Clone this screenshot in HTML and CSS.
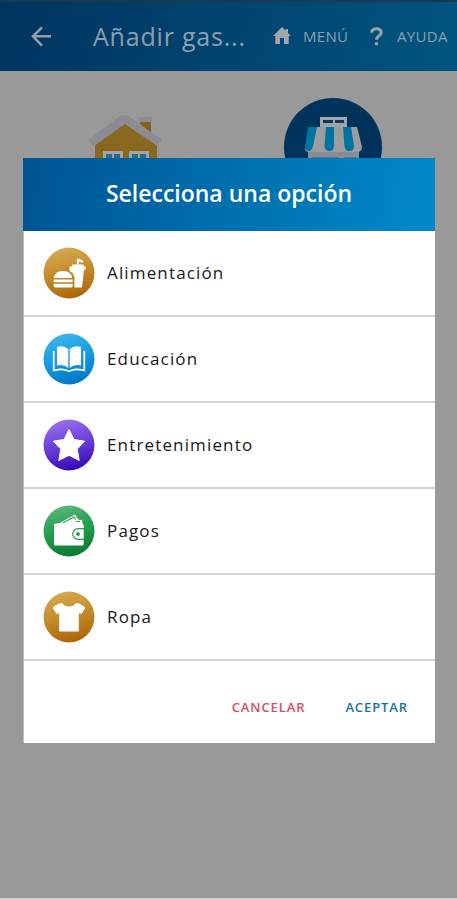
FILE: index.html
```html
<!DOCTYPE html>
<html lang="es">
<head>
<meta charset="utf-8">
<title>Añadir gasto</title>
<link rel="stylesheet" href="styles.css">
</head>
<body>
<div class="screen">
  <header class="topbar">
    <svg class="back" viewBox="0 0 22 22"><path d="M21 10.8H2M11.5 1.5L2 10.8L11.5 20.5"/></svg>
    <h1 class="page-title">Añadir gas...</h1>
    <svg class="home" viewBox="0 0 18 18"><path d="M9 0L0 9H2.3V17H7V11H11V17H15.7V9H18L15 6V2H12.6V3.6Z"/></svg>
    <span class="nav menu">MENÚ</span>
    <svg class="question" viewBox="0 0 13 19"><path d="M1.6 5.6C1.8 0.6 11.2 0.4 11.2 5.5C11.2 9 6.5 8.6 6.5 12.8"/><circle cx="6.5" cy="16.8" r="1.8"/></svg>
    <span class="nav">AYUDA</span>
  </header>
  <main class="categories">
    <svg class="house" viewBox="0 0 76 84">
      <path fill="#876019" d="M52 4h11v22H52z"/><path fill="#89671e" d="M7 27L37 7L69 29V84H7z"/>
      <path fill="#8b8b91" d="M0 24L32 0Q37-2 42 1L74 24L69 30L37 8L6 30Z"/><path fill="#8b8b91" d="M51 1h13v5H51z"/>
      <path fill="#a1a3a4" d="M15 35h20v20H15zM41 35h20v20H41z"/><path fill="#226d88" d="M18 38h6v14h-6zM26 38h6v14h-6zM44 38h6v14h-6zM52 38h6v14h-6z"/>
    </svg>
    <svg class="store" viewBox="0 0 98 98">
      <circle cx="49" cy="49" r="49" fill="#00335c"/>
      <path fill="#888d93" d="M24 52h51v34H24z"/><path fill="#4d7891" d="M28 59h26v15H28zM60 59h12v15H60z"/>
      <path fill="#9b9ca0" d="M26 29h47l5 20q0 5-5 5H25q-5 0-4-5Z"/>
      <path fill="#0074a0" d="M24 29h9l-4 19q-1 5-5 5q-4-1-3-5ZM42 29h8v19q0 5-4.500 5t-5-5ZM59 29h8l3 19q0 5-4.500 5t-5-5Z"/>
      <path fill="#9fa5ad" d="M36 19h27v10H36z"/><path fill="#123752" d="M39 22h10v3H39zM51 22h9v3h-9z"/>
    </svg>
  </main>
  <section class="dialog">
    <h2 class="dialog-title"><span>Selecciona una opción</span></h2>
    <ul class="options">
      <li class="option">
        <svg class="icon" viewBox="0 0 52 52"><defs><linearGradient id="gold" x1=".35" y1="0" x2=".6" y2="1"><stop stop-color="#d7aa52"/><stop offset=".5" stop-color="#c28a28"/><stop offset="1" stop-color="#ad6508"/></linearGradient></defs>
        <circle cx="26" cy="26" r="25.5" fill="url(#gold)"/>
        <path fill="#fff" d="M10.700 31q1-7 9.300-7t9.300 7zM10.700 32.500h19v2.700h-19zM10.700 36.700h19v2.300q0 1.600-2 1.600h-15q-2 0-2-1.600zM26.500 19.500h2l1-2h4.300v-5.500l1-.6 5.700 2.300-.7 2-4-1.300v3.100h4.400l1 2h1.400v3H41l-2 18.100h-7.600V31q-.2-5-4.900-7z"/></svg><span>Alimentación</span></li>
      <li class="option">
        <svg class="icon" viewBox="0 0 52 52"><defs><linearGradient id="blue" x1=".35" y1="0" x2=".6" y2="1"><stop stop-color="#3bb5ee"/><stop offset=".5" stop-color="#159bdf"/><stop offset="1" stop-color="#0475c5"/></linearGradient></defs>
        <circle cx="26" cy="26" r="25.5" fill="url(#blue)"/>
        <path fill="#fff" d="M14 14q7-2 11.300 2v19q-4.300-4-11.300-2.500zM38 14q-7-2-11.300 2v19q4.300-4 11.300-2.500z"/><path fill="none" stroke="#fff" stroke-width="1.700" d="M10.700 18v19.500q8-2 12-.5l2.300 1h2l2.300-1q4-1.500 12 .5V18"/></svg><span>Educación</span></li>
      <li class="option">
        <svg class="icon" viewBox="0 0 52 52"><defs><linearGradient id="violet" x1=".35" y1="0" x2=".6" y2="1"><stop stop-color="#9871ef"/><stop offset=".45" stop-color="#7042dd"/><stop offset="1" stop-color="#3608b7"/></linearGradient></defs>
        <circle cx="26" cy="26" r="25.5" fill="url(#violet)"/>
        <path fill="#fff" stroke="#fff" stroke-linejoin="round" d="M26 10.500L31 20.500L41.700 22.200L34.200 30.100L36.200 41.400L26 36.300L15.800 41.400L17.800 30.100L10.300 22.200L21 20.500Z"/></svg><span>Entretenimiento</span></li>
      <li class="option">
        <svg class="icon" viewBox="0 0 52 52"><defs><linearGradient id="green" x1=".35" y1="0" x2=".6" y2="1"><stop stop-color="#57b77b"/><stop offset=".45" stop-color="#279e50"/><stop offset="1" stop-color="#077b31"/></linearGradient></defs>
        <circle cx="26" cy="26" r="25.5" fill="url(#green)"/>
        <path fill="#fff" d="M12.500 18.500l3.700-.3L32 9.500l3.600 5.200 3.500.3.300 3.500q1.300.5 1.300 2V39q0 1.500-1.500 1.500H12.500Q11 40.500 11 39V20q0-1.500 1.500-1.500z"/>
        <path fill="none" stroke="#279e50" stroke-width="1.200" d="M20 17.800L31 12l2 2.500M33 16.500h4M41.500 23.700h-6.500a5.300 5.300 0 0 0 0 10.600h6.500"/><circle cx="35" cy="29" r="1.900" fill="#279e50"/></svg><span>Pagos</span></li>
      <li class="option">
        <svg class="icon" viewBox="0 0 52 52"><circle cx="26" cy="26" r="25.500" fill="url(#gold)"/>
        <path fill="#fff" d="M19 12q2.500 3.500 7 3.500t7-3.500q6 .8 9.200 5L38.500 23l-2.700-.8V40.500H16.200V22.200l-2.700.8L9.800 17q3.200-4.200 9.200-5z"/></svg><span>Ropa</span></li>
    </ul>
    <footer class="actions"><span class="cancel">CANCELAR</span><span class="accept">ACEPTAR</span></footer>
  </section>
</div>
</body>
</html>
```
FILE: styles.css
```css
* { box-sizing: border-box; }
body { margin: 0; font-family: "Open Sans", sans-serif; background: #999; }
h1, h2, ul { margin: 0; padding: 0; font-weight: 400; }
.screen { position: relative; height: 900px; overflow: hidden; background: #999; border-bottom: 2px solid #d3d3d3; }
.topbar { display: flex; align-items: center; height: 71px; padding: 0 0 1px 31px; border-top: 2px solid #173951; background: linear-gradient(105deg, #00345f, #005580); color: #8c9fae; }
.back { width: 21px; height: 21px; fill: none; stroke: #969fa6; stroke-width: 2.6; flex: none; }
.page-title { width: 160px; margin-left: 41px; flex: none; font-size: 25px; letter-spacing: .8px; white-space: nowrap; }
.home { width: 18px; height: 18px; margin-left: 20px; fill: #a0a6aa; flex: none; }
.nav { font-size: 15px; letter-spacing: .3px; white-space: nowrap; }
.menu { width: 46px; margin-left: 12px; }
.question { width: 13px; height: 19px; margin: 0 14px 0 21px; fill: #9ba2a7; flex: none; }
.question path { fill: none; stroke: #9ba2a7; stroke-width: 3.2; }
.categories { display: flex; align-items: flex-start; padding: 27px 0 0 88px; }
.house { width: 76px; height: 84px; margin-top: 18px; overflow: visible; }
.store { width: 98px; height: 98px; margin-left: 120px; }
.dialog { position: absolute; left: 23px; top: 158px; width: 412px; height: 585px; background: #fff; border-left: 1px solid #bbb; }
.dialog-title { display: flex; align-items: center; justify-content: center; height: 73px; padding-bottom: 3px; margin-left: -1px; background: linear-gradient(100deg, #005493, #008ac9); color: #fff; font-size: 23px; font-weight: 600; white-space: nowrap; }
.options { list-style: none; }
.option { display: flex; align-items: center; height: 86.1px; padding-left: 19px; border-bottom: 2px solid #d2d2d2; font-size: 17px; letter-spacing: 1.15px; color: #171717; }
.option:first-child { height: 85.5px; }
.option span { padding-bottom: .4px; }
.icon { width: 52px; height: 52px; margin-right: 12px; flex: none; }
.actions { display: flex; justify-content: flex-end; padding: 37px 27px 0 0; font-size: 13px; line-height: 18px; font-weight: 600; letter-spacing: .9px; }
.cancel { margin-right: 40px; color: #d74c60; }
.accept { color: #15739a; }
```
